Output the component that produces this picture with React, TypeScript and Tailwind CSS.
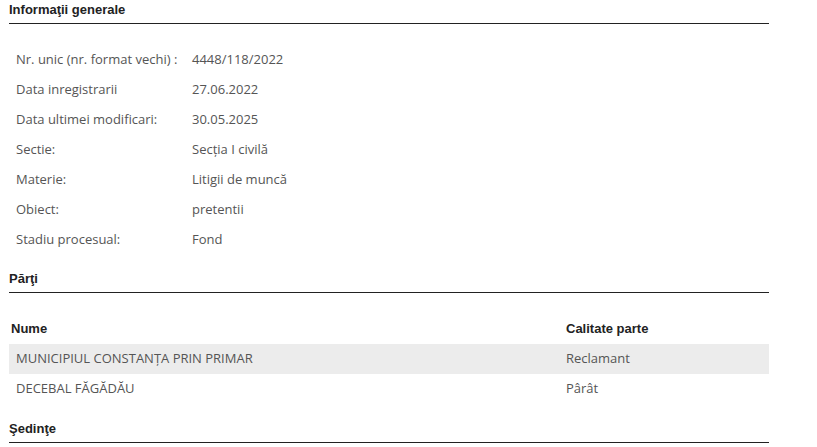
import React from 'react';

const info: [string, string][] = [
  ['Nr. unic (nr. format vechi) :', '4448/118/2022'],
  ['Data inregistrarii', '27.06.2022'],
  ['Data ultimei modificari:', '30.05.2025'],
  ['Sectie:', 'Secția I civilă'],
  ['Materie:', 'Litigii de muncă'],
  ['Obiect:', 'pretentii'],
  ['Stadiu procesual:', 'Fond'],
];

const parti: [string, string][] = [
  ['MUNICIPIUL CONSTANȚA PRIN PRIMAR', 'Reclamant'],
  ['DECEBAL FĂGĂDĂU', 'Pârât'],
];

const SectionTitle: React.FC<{ title: string }> = ({ title }) => (
  <div className="border-b border-[#222] pb-[5px] text-[13px] font-bold leading-[16px] text-[#222] font-['Liberation_Sans',Arial,sans-serif]">
    {title}
  </div>
);

const App: React.FC = () => {
  return (
    <div className="w-[817px] h-[447px] bg-white overflow-hidden font-['Open_Sans',sans-serif]">
      <div className="ml-[9px] w-[760px] pt-[2px]">
        <SectionTitle title="Informaţii generale" />

        <div className="mt-[21px] px-[7px]">
          {info.map(([label, value]) => (
            <div key={label} className="flex h-[30px] items-center text-[13px] text-[#555]">
              <div className="w-[176px]">{label}</div>
              <div>{value}</div>
            </div>
          ))}
        </div>

        <div className="mt-[16px]">
          <SectionTitle title="Părţi" />
        </div>

        <div className="mt-[21px]">
          <div className="flex h-[30px] items-center px-[2px] text-[13px] font-bold text-[#222] font-['Liberation_Sans',Arial,sans-serif]">
            <div className="w-[555px]">Nume</div>
            <div>Calitate parte</div>
          </div>
          {parti.map(([name, role], i) => (
            <div
              key={name}
              className={`flex h-[30px] items-center px-[7px] text-[13px] text-[#555] ${i === 0 ? 'bg-[#ececec]' : ''}`}
            >
              <div className="w-[550px]">{name}</div>
              <div>{role}</div>
            </div>
          ))}
        </div>

        <div className="mt-[17px]">
          <SectionTitle title="Şedinţe" />
        </div>
      </div>
    </div>
  );
};

export default App;
